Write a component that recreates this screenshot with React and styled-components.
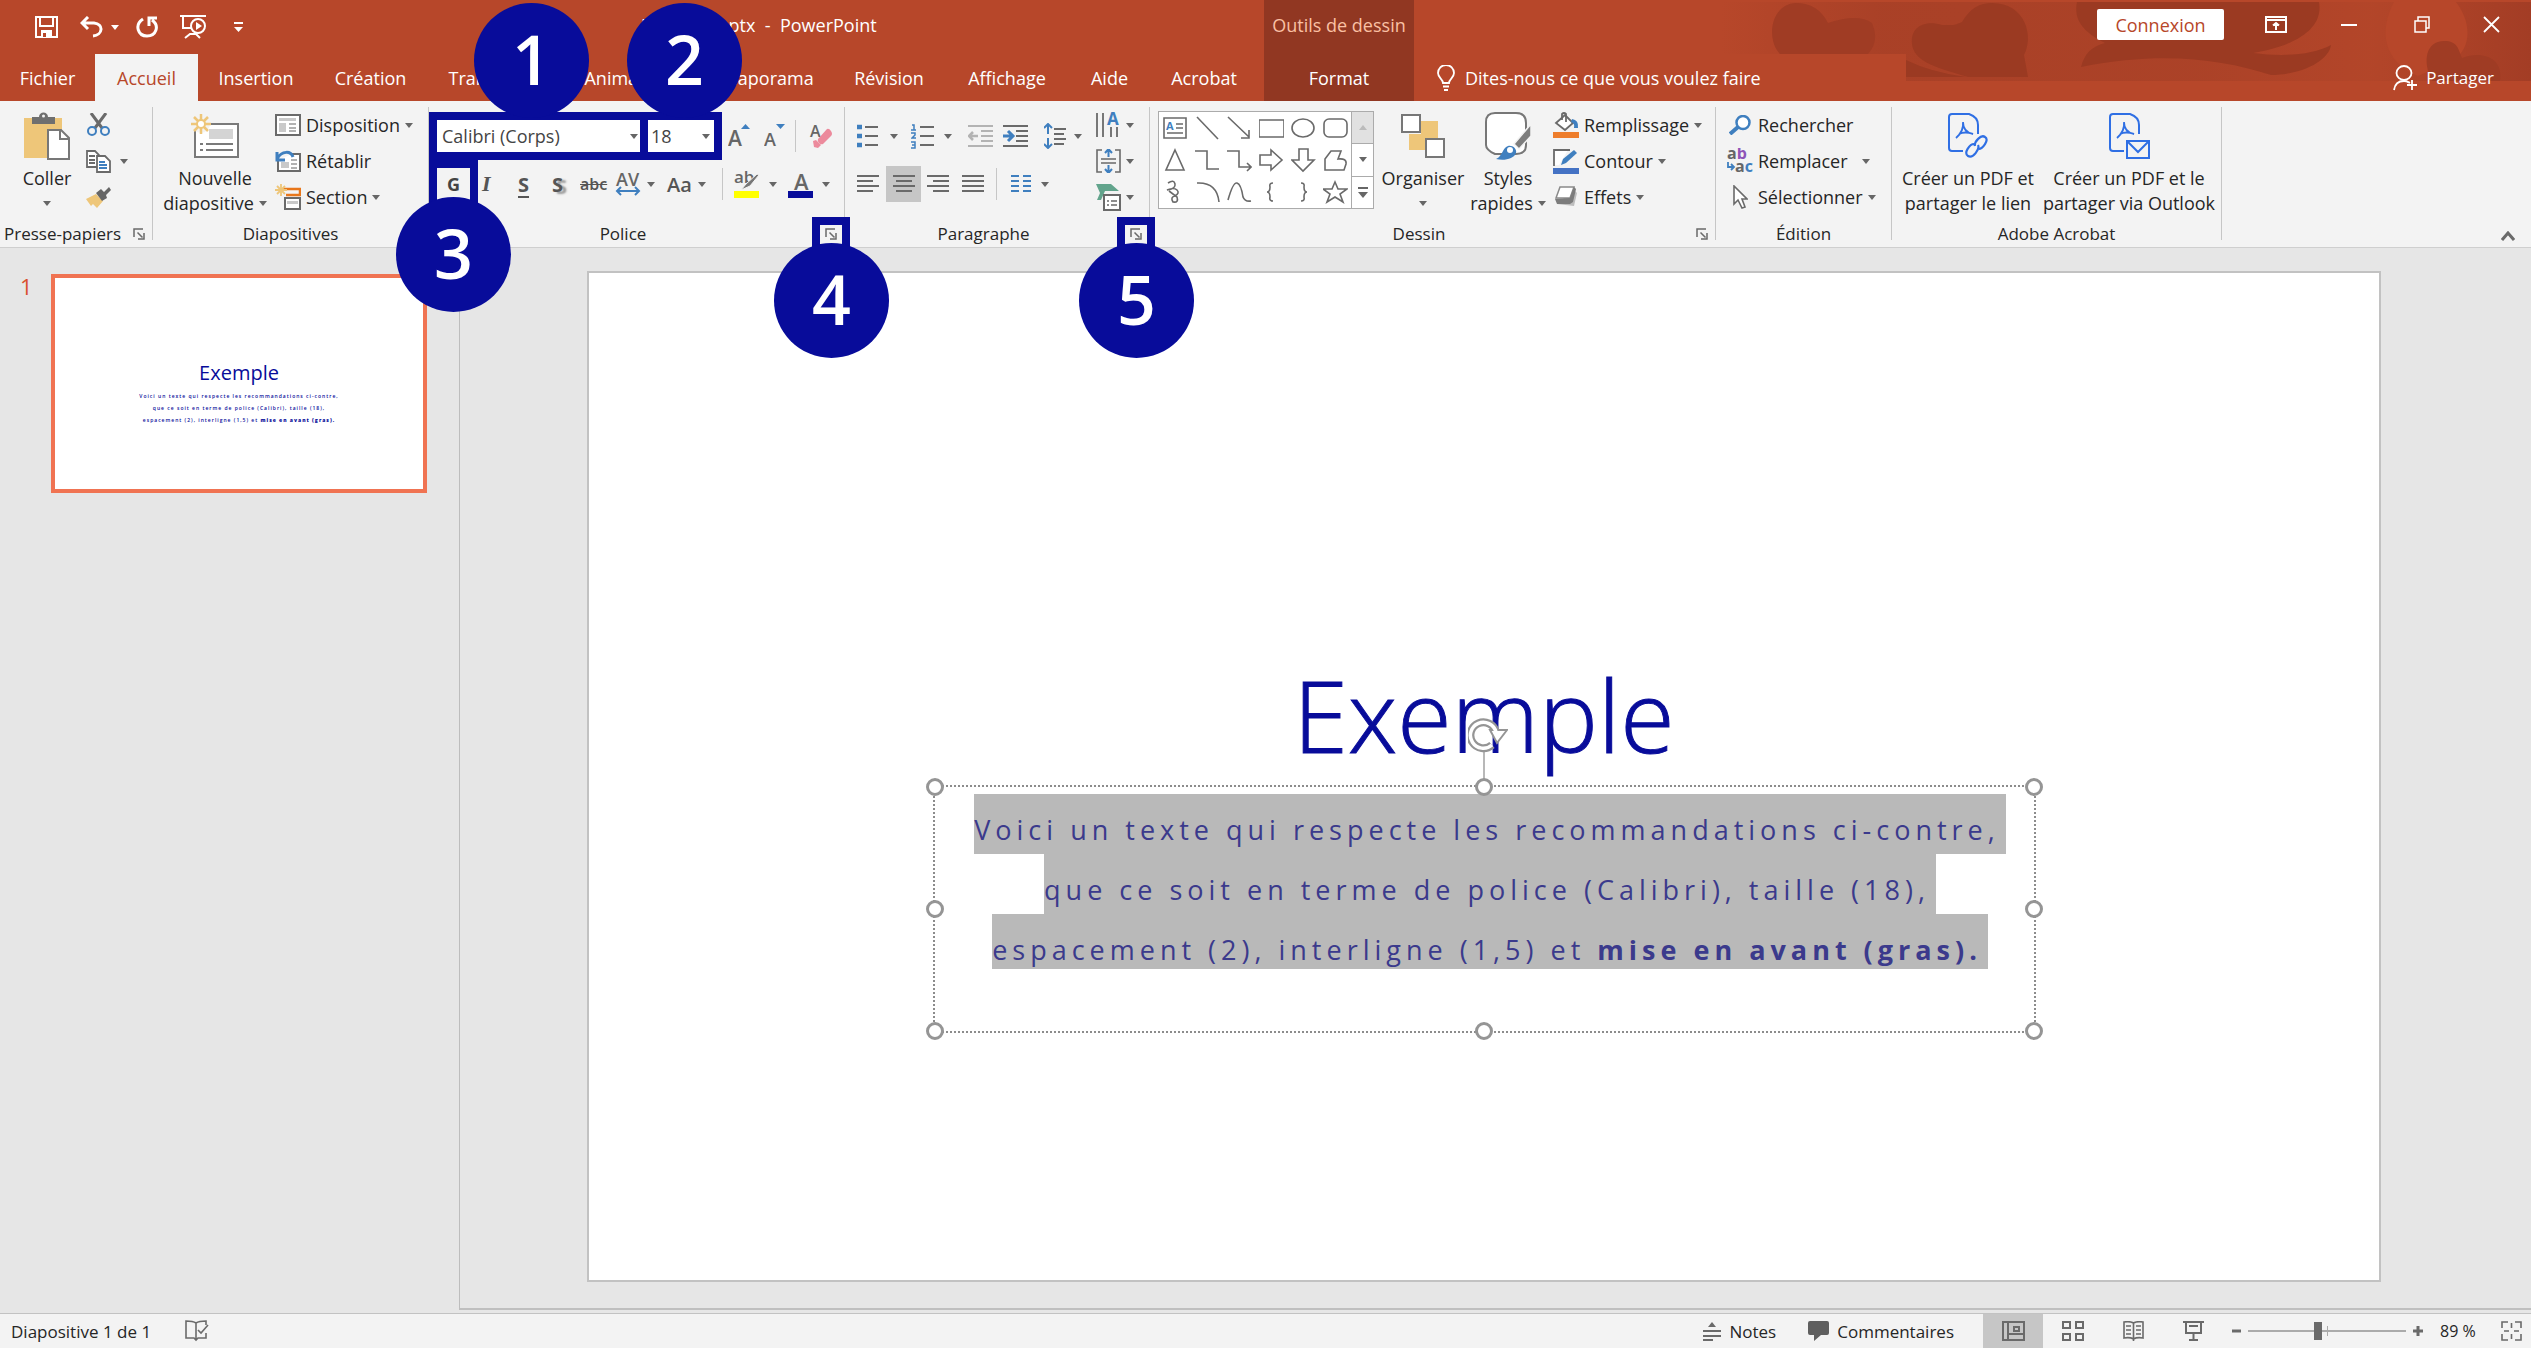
import React from 'react';
import styled, { createGlobalStyle } from 'styled-components';

const C = {
  brand: '#b7472a',
  brandDark: '#913722',
  ribbon: '#f3f3f3',
  work: '#e6e6e6',
  line: '#c6c6c6',
  ink: '#262626',
  icon: '#6a6a6a',
  blue: '#3f7fbf',
  navy: '#080c9a',
  gold: '#eec679',
  acrobat: '#2f6fe4',
};

const Global = createGlobalStyle`
  *, *::before, *::after { box-sizing: border-box; }
  body { margin: 0; background: ${C.work}; }
  body, button, select, input { font-family: "Open Sans", "Noto Sans", sans-serif; }
  button { border: 0; padding: 0; margin: 0; background: none; color: inherit; font-size: inherit; line-height: inherit; cursor: pointer; }
  svg { display: block; flex: none; }
`;

const Shell = styled.div`
  display: flex;
  flex-direction: column;
  min-height: 100vh;
  color: ${C.ink};
  font-size: 17px;
`;

/* ---------- header ---------- */
const Header = styled.header`
  position: relative;
  background: ${C.brand};
  color: #fff;
`;
const Pattern = styled.svg`
  position: absolute;
  top: 0;
  right: 0;
`;
const TitleBar = styled.div`
  position: relative;
  display: grid;
  grid-template-columns: 641px 623px 150px 1fr;
  height: 54px;
`;
const QuickAccess = styled.div`
  display: flex;
  align-items: center;
  padding-left: 35px;
`;
const QuickButton = styled.button`
  display: flex;
  align-items: center;
  gap: 8px;
  width: ${(p) => p.$w}px;
`;
const DocTitle = styled.div`
  padding-top: 12px;
  line-height: 26px;
  font-size: 18px;
  white-space: pre;
`;
const ContextTitle = styled.div`
  background: ${C.brandDark};
  color: #fac0a4;
  padding-top: 12px;
  font-size: 18px;
  line-height: 26px;
  text-align: center;
`;
const WindowControls = styled.div`
  display: flex;
  justify-content: flex-end;
  align-items: flex-start;
  padding-top: 9px;
`;
const SignIn = styled.button`
  width: 127px;
  height: 31px;
  margin-right: 21px;
  background: #fff;
  border-radius: 2px;
  color: ${C.brand};
  font-size: 18px;
`;
const WindowButton = styled.button`
  display: flex;
  justify-content: center;
  align-items: center;
  width: ${(p) => p.$w || 73}px;
  height: 31px;
`;
const TabBar = styled.nav`
  position: relative;
  display: flex;
  height: 47px;
`;
const Tab = styled.button`
  width: ${(p) => p.$w}px;
  height: 47px;
  font-size: 18px;
  line-height: 24px;
  color: ${(p) => (p.$active ? C.brand : '#fff')};
  background: ${(p) => (p.$active ? C.ribbon : p.$context ? C.brandDark : 'transparent')};
  margin-left: ${(p) => (p.$context ? 6 : 0)}px;
`;
const TellMe = styled.button`
  display: flex;
  align-items: center;
  gap: 9px;
  margin-left: 23px;
  font-size: 18px;
`;
const Share = styled.button`
  display: flex;
  align-items: center;
  gap: 8px;
  margin-left: auto;
  padding-right: 37px;
`;

/* ---------- ribbon ---------- */
const Ribbon = styled.section`
  position: relative;
  z-index: 2;
  display: flex;
  height: 147px;
  padding: 6px 0;
  background: ${C.ribbon};
  border-bottom: 1px solid #cfcfcf;
  font-size: 18px;
`;
const Group = styled.div`
  display: flex;
  flex-direction: column;
  width: ${(p) => p.$w}px;
  height: 133px;
  border-right: 1px solid ${C.line};
`;
const GroupBody = styled.div`
  display: flex;
  flex: none;
  height: 115px;
  padding-left: ${(p) => p.$pad || 0}px;
`;
const GroupFooter = styled.div`
  display: flex;
  flex: none;
  align-items: center;
  height: 24px;
  padding-right: ${(p) => (p.$launcher ? 7 : 0)}px;
  font-size: 17px;
  line-height: 24px;
`;
const GroupName = styled.span`
  flex: 1;
  text-align: center;
`;
const LauncherBox = styled.div`
  position: relative;
  padding-left: 8px;
`;
const Big = styled.button`
  display: flex;
  flex-direction: column;
  align-items: center;
  align-self: flex-start;
  width: ${(p) => p.$w}px;
  padding-top: 5px;
  line-height: 25px;
`;
const BigIcon = styled.span`
  display: flex;
  align-items: center;
  justify-content: center;
  height: 48px;
  margin-bottom: 6px;
`;
const BigLine = styled.span`
  display: flex;
  align-items: center;
  gap: 5px;
  height: 25px;
  white-space: nowrap;
`;
const Stack = styled.div`
  display: flex;
  flex-direction: column;
  padding-left: ${(p) => p.$pad || 0}px;
`;
const Small = styled.button`
  display: flex;
  align-items: center;
  gap: ${(p) => p.$gap || 5}px;
  height: 36px;
  white-space: nowrap;
`;
const SmallIcon = styled.span`
  display: flex;
  justify-content: center;
  width: 26px;
`;
const ToolRow = styled.div`
  display: grid;
  grid-template-columns: ${(p) => p.$cols};
  align-items: center;
  height: 48px;
`;
const Rows = styled.div`
  width: ${(p) => p.$w || 416}px;
  padding-top: 5px;
`;
const Tool = styled.button`
  display: flex;
  align-items: center;
  justify-self: start;
  gap: ${(p) => p.$gap || 6}px;
  height: 36px;
  color: #555;
  font-size: ${(p) => p.$size || 18}px;
  font-weight: ${(p) => (p.$bold ? 700 : 600)};
  text-decoration: ${(p) => p.$deco || 'none'};
  text-shadow: ${(p) => (p.$shadow ? '4px 2px 2px #999' : 'none')};
  text-underline-offset: 4px;
`;
const ItalicTool = styled(Tool)`
  font-family: "Liberation Serif", serif;
  font-size: 22px;
  font-style: italic;
`;
const Pressed = styled(Tool)`
  width: 35px;
  justify-content: center;
  background: #c6c6c6;
`;
const Divider = styled.span`
  width: 1px;
  height: 32px;
  background: ${C.line};
`;
const Marked = styled.div`
  position: relative;
  width: ${(p) => p.$w}px;
  height: 48px;
`;
const Combo = styled.select`
  appearance: none;
  width: 100%;
  height: 48px;
  margin: 0;
  padding: 0 ${(p) => (p.$joined ? 3 : 5)}px;
  border: 8px solid ${C.navy};
  border-left-width: ${(p) => (p.$joined ? 0 : 8)}px;
  border-radius: 0;
  background: #fff;
  color: #444;
  font-size: 18px;
`;
const ComboArrow = styled.span`
  position: absolute;
  right: ${(p) => p.$right}px;
  top: 22px;
  pointer-events: none;
`;
const BoldButton = styled.button`
  width: 49px;
  height: 48px;
  border: 8px solid ${C.navy};
  color: #444;
  font-weight: 700;
`;
const Callout = styled.span`
  position: absolute;
  z-index: 3;
  left: ${(p) => p.$left}px;
  top: ${(p) => p.$top}px;
  width: 115px;
  height: 115px;
  border-radius: 50%;
  background: ${C.navy};
  color: #fff;
  font-size: 68px;
  font-weight: 600;
  line-height: 112px;
  text-align: center;
  pointer-events: none;
`;
const Frame = styled.span`
  position: absolute;
  left: -5px;
  top: -5px;
  width: 38px;
  height: 38px;
  border: 8px solid ${C.navy};
  pointer-events: none;
`;
const Launcher = styled.button`
  display: block;
  padding: 6px 0;
`;
const Gallery = styled.div`
  display: grid;
  grid-template-columns: repeat(6, 32px) 1fr;
  width: 216px;
  height: 98px;
  margin-top: 4px;
  border: 1px solid #ababab;
  background: #fff;
`;
const ShapeButton = styled.button`
  display: flex;
  align-items: center;
  justify-content: center;
  height: 32px;
`;
const GalleryScroll = styled.div`
  grid-column: 7;
  grid-row: 1 / span 3;
  display: flex;
  flex-direction: column;
  border-left: 1px solid #ababab;
`;
const ScrollButton = styled.button`
  display: flex;
  align-items: center;
  justify-content: center;
  flex: 1;
  background: ${(p) => (p.$off ? '#e1e1e1' : '#fff')};
  & + & { border-top: 1px solid #ababab; }
`;
const Collapse = styled.button`
  align-self: flex-end;
  margin-left: auto;
  padding-right: 16px;
`;

/* ---------- workspace ---------- */
const Workspace = styled.main`
  display: grid;
  grid-template-columns: 460px 1fr;
  flex: 1;
  background: ${C.work};
  padding-bottom: 3px;
`;
const Thumbs = styled.aside`
  display: flex;
  align-items: flex-start;
  border-right: 1px solid #bdbdbd;
  padding: 26px 32px 0 20px;
`;
const ThumbNumber = styled.span`
  width: 31px;
  color: #d9502f;
  font-size: 22px;
  line-height: 24px;
`;
const Thumb = styled.button`
  display: flex;
  flex-direction: column;
  align-items: center;
  flex: 1;
  height: 219px;
  border: 4px solid #f07352;
  padding-top: 80px;
  background: #fff;
  color: ${C.navy};
`;
const ThumbTitle = styled.span`
  margin-bottom: 2px;
  font-size: 20px;
  line-height: 30px;
`;
const ThumbLine = styled.span`
  font-size: 5px;
  font-weight: 600;
  line-height: 12px;
  letter-spacing: 1px;
  white-space: nowrap;
`;
const Stage = styled.div`
  display: flex;
  border-bottom: 2px solid #bfbfbf;
  padding: 23px 150px 26px 127px;
`;
const Slide = styled.article`
  display: flex;
  flex-direction: column;
  align-items: center;
  flex: 1;
  padding-top: 386px;
  border: 2px solid #c2c2c2;
  background: #fff;
  color: ${C.navy};
`;
const SlideTitle = styled.h1`
  margin: 0 0 14px;
  font-size: 99px;
  font-weight: 300;
  line-height: 112px;
  -webkit-text-stroke: 1px ${C.navy};
`;
const TextBox = styled.div`
  position: relative;
  display: flex;
  flex-direction: column;
  align-items: center;
  width: 1103px;
  height: 248px;
  padding: 7px 0 0 12px;
  border: 2px dotted #8c8c8c;
`;
const Line = styled.p`
  margin: 0;
  padding: ${(p) => (p.$last ? '18px 6px 1px 0' : '18px 6px 6px 0')};
  background: #b9b9b9;
  color: #3b3a8c;
  font-size: 27px;
  line-height: 36px;
  letter-spacing: 5px;
  white-space: nowrap;
`;
const Handle = styled.span`
  position: absolute;
  left: ${(p) => p.$x};
  top: ${(p) => p.$y};
  width: 18px;
  height: 18px;
  margin: -9px;
  border: 3px solid #959595;
  border-radius: 50%;
  background: #fff;
`;
const Rotate = styled.svg`
  position: absolute;
  left: 50%;
  top: -70px;
  margin-left: -16px;
`;

/* ---------- status bar ---------- */
const Status = styled.footer`
  display: flex;
  align-items: center;
  height: 35px;
  border-top: 1px solid #c2c2c2;
  background: ${C.ribbon};
  padding: 0 9px 0 11px;
`;
const StatusButton = styled.button`
  display: flex;
  align-items: center;
  gap: 8px;
  margin-right: ${(p) => p.$after || 0}px;
`;
const StatusLeft = styled.div`
  display: flex;
  align-items: center;
  gap: 34px;
  margin-right: auto;
`;
const ViewButton = styled.button`
  display: flex;
  align-items: center;
  justify-content: center;
  width: 60px;
  height: 34px;
  background: ${(p) => (p.$active ? '#c6c6c6' : 'transparent')};
`;
const Zoom = styled.div`
  display: flex;
  align-items: center;
  gap: 7px;
  padding-left: 9px;
`;
const Slider = styled.input`
  appearance: none;
  width: 158px;
  height: 24px;
  margin: 0;
  background:
    linear-gradient(#ababab, #ababab) 79px 50% / 1px 10px no-repeat,
    linear-gradient(#ababab, #ababab) 0 50% / 100% 2px no-repeat;
  &::-webkit-slider-thumb {
    appearance: none;
    width: 8px;
    height: 18px;
    background: #6a6a6a;
  }
`;
const Percent = styled.output`
  width: 38px;
  margin: 0 16px 0 10px;
  font-size: 16px;
  white-space: nowrap;
`;

/* ---------- drawings ---------- */
const Svg = ({ w, h, children, ...rest }) => (
  <svg width={w} height={h} viewBox={`0 0 ${w} ${h}`} fill="none" stroke={C.icon} strokeWidth="2" aria-hidden="true" {...rest}>
    {children}
  </svg>
);
const Caret = ({ color = '#666' }) => (
  <Svg w={8} h={5} stroke="none"><path d="M0 0h8L4 5z" fill={color} /></Svg>
);
const LauncherIcon = () => (
  <Svg w={12} h={12} strokeWidth="1.5"><path d="M1 9V1h9M4.500 4.500l5 5M11 5v6H5" /></Svg>
);

const SaveIcon = () => (
  <Svg w={23} h={22} stroke="#fff"><path d="M1 1h21v20H1z M5 1v9h13V1" /><path d="M6 14h11v7H6z" fill="#fff" stroke="none" /><path d="M8 17h3v4H8z" fill={C.brand} stroke="none" /></Svg>
);
const UndoIcon = () => (
  <Svg w={23} h={22} stroke="#fff" strokeWidth="3"><path d="M8 1L2 7l6 6M2 7h12c10 1 9 12-1 13" /></Svg>
);
const RedoIcon = () => (
  <Svg w={22} h={22} stroke="#fff" strokeWidth="3"><path d="M7 3C-2 9 2 20 11 20s13-10 5-16M13 10V2h8" /></Svg>
);
const PresentIcon = () => (
  <Svg w={27} h={26} stroke="#fff"><path d="M0 2h26M3 2v12h8M5 24l5-4h6l4 4" /><circle cx="18" cy="12" r="7" /><path d="M16 8l6 4-6 4z" fill="#fff" stroke="none" /></Svg>
);
const CustomizeIcon = () => (
  <Svg w={9} h={10} stroke="#fff"><path d="M0 1h9" /><path d="M0 5h9l-4.500 5z" fill="#fff" stroke="none" /></Svg>
);
const BulbIcon = () => (
  <Svg w={19} h={26} stroke="#fff"><path d="M6 18c0-4-5-5-5-10a8 8 0 0 1 16 0c0 5-5 6-5 10zM6 21.500h6M7 25h4" strokeWidth="1.800" /></Svg>
);
const ShareIcon = () => (
  <Svg w={25} h={26} stroke="#fff" strokeWidth="1.800"><ellipse cx="11" cy="8" rx="7.500" ry="7" /><path d="M1 25c1-7 5-9 10-9 3 0 4 1 6 2M14 20h10M19 15v10" /></Svg>
);

const PasteIcon = () => (
  <Svg w={46} h={48}><path d="M0 6h38v40H0z" fill={C.gold} stroke="none" /><path d="M8 12V5h7c0-6 9-6 9 0h7v7z" fill="#6f6f6f" stroke="none" /><circle cx="19.500" cy="4" r="1.500" fill={C.ribbon} stroke="none" /><path d="M24 18h13l8 8v21H24z" fill="#fff" stroke="#777" /><path d="M36 18v9h9" stroke="#777" /></Svg>
);
const CutIcon = () => (
  <Svg w={23} h={24}><path d="M4 0l11 15M19 0L8 15" strokeWidth="3" /><circle cx="5" cy="18" r="4" stroke={C.blue} /><circle cx="18" cy="18" r="4" stroke={C.blue} /></Svg>
);
const CopyIcon = () => (
  <Svg w={25} h={23} strokeWidth="1.800"><path d="M1 1h8l4 4v12H1z M3 6h6M3 10h6M3 13h6" fill="#fff" /><path d="M11 6h8l5 5v11H11z" fill="#fff" /><path d="M13 12h6M13 15h8M13 18h8" stroke={C.blue} /></Svg>
);
const BrushIcon = () => (
  <Svg w={26} h={22} stroke="none"><path d="M1 13l10-5 7 7-6 7-4-4-2 2z" fill={C.gold} /><path d="M11 7l5-4 3 3 5-5 2 3-5 5 1 3-5 3z" fill="#666" /></Svg>
);
const NewSlideIcon = () => (
  <Svg w={48} h={44}><path d="M4 10h43v33H4z" fill="#fff" stroke="#7a7a7a" /><path d="M18 15h24v10H18z" fill="#d4d4d4" stroke="none" /><path d="M15 30h27M15 36h27M9 30h3M9 36h3" stroke="#7a7a7a" /><circle cx="10" cy="10" r="9" fill={C.ribbon} stroke="none" /><path d="M10 0v20M0 10h20M3 3l14 14M17 3L3 17" stroke={C.gold} strokeWidth="2.500" /><circle cx="10" cy="10" r="4" fill="#fff" stroke={C.gold} /></Svg>
);
const LayoutIcon = () => (
  <Svg w={26} h={22}><path d="M1 1h24v20H1z" fill="#fff" /><path d="M4 4h17v3H4zM4 9h7v9H4z" fill="#c9c9c9" stroke="none" /><path d="M14 10h7M14 14h7M14 17h7" stroke="#999" strokeWidth="1.500" /></Svg>
);
const ResetIcon = () => (
  <Svg w={26} h={22}><path d="M3 10v11h22V4h-8" fill="#fff" /><path d="M6 12h8v6H6z" fill="#c9c9c9" stroke="none" /><path d="M16 10h6M16 14h6M16 18h6" stroke="#999" strokeWidth="1.500" /><path d="M2 2v8h8M2 9c5-9 14-8 16-2" stroke={C.blue} strokeWidth="3" /></Svg>
);
const SectionIcon = () => (
  <Svg w={26} h={26}><path d="M10 14h15v11H10z" fill="#fff" /><path d="M12 17h11v3H12z" fill="#c9c9c9" stroke="none" /><path d="M8 5h17v6H11" stroke="#e8761a" strokeWidth="2.500" /><path d="M6 0v12M0 6h12M2 2l8 8M10 2l-8 8" stroke={C.gold} strokeWidth="1.800" /></Svg>
);
const GrowIcon = ({ small }) => (
  <Svg w={22} h={26} stroke="none"><text x="0" y="23" fontSize={small ? 18 : 21} fontWeight="600" fill="#666">A</text>{small ? <path d="M12 1h9l-4.500 5z" fill={C.blue} /> : <path d="M13 6h9l-4.500-5z" fill={C.blue} />}</Svg>
);
const EraserIcon = () => (
  <Svg w={24} h={25} stroke="none"><text x="1" y="13" fontSize="16" fontWeight="600" fill="#666">A</text><path d="M9 15l9-10q2-1 4 2t0 5l-8 8q-2 1-4-1t-1-4z" fill="#ec8a9c" /><path d="M4 17l3-1 5 5-3 3-4-1z" fill="#ec8a9c" /></Svg>
);
const SpacingIcon = () => (
  <Svg w={26} h={26} stroke="none"><text x="1" y="15" fontSize="18" fontWeight="600" fill="#666">AV</text><path d="M2 20h22M6 16l-4 4 4 4M20 16l4 4-4 4" stroke={C.blue} strokeWidth="2" /></Svg>
);
const HighlightIcon = () => (
  <Svg w={26} h={28} stroke="none"><text x="0" y="13" fontSize="17" fontWeight="600" fill="#666">ab</text><path d="M7 20l5-6L23 4l2 1-9 11z" fill="#777" stroke={C.ribbon} strokeWidth="1" /><path d="M0 21h25v7H0z" fill="#ff0" /></Svg>
);
const FontColorIcon = () => (
  <Svg w={26} h={28} stroke="none"><text x="6" y="20" fontSize="22" fontWeight="600" fill="#666">A</text><path d="M0 21h25v7H0z" fill={C.navy} /></Svg>
);
const BulletsIcon = () => (
  <Svg w={22} h={26}><path d="M8 4h13M8 13h13M8 22h13" /><path d="M0 4h5M0 13h5M0 22h5" stroke={C.blue} strokeWidth="4.500" /></Svg>
);
const NumbersIcon = () => (
  <Svg w={23} h={26}><path d="M9 4h14M9 13h14M9 22h14" /><path d="M1 2h2v5M0 7h5M0 10h4v2l-3 3h4M0 19h4v6H0M1 22h3" stroke={C.blue} strokeWidth="1.500" /></Svg>
);
const IndentIcon = ({ out }) => (
  <Svg w={25} h={24} stroke={out ? '#b3b3b3' : C.icon}><path d="M0 2h25M13 7h12M13 12h12M13 17h12M0 22h25" />{out ? <path d="M10 12H1M5 8l-4 4 4 4" strokeWidth="2.500" /> : <path d="M0 12h9M5 7l5 5-5 5" stroke={C.blue} strokeWidth="3" />}</Svg>
);
const LineSpacingIcon = () => (
  <Svg w={22} h={26}><path d="M10 6h12M10 11h10M10 16h12M10 21h10" /><path d="M4 1v10M0 5l4-4 4 4M4 15v10M0 21l4 4 4-4" stroke={C.blue} /></Svg>
);
const AlignIcon = ({ d }) => <Svg w={22} h={18} strokeWidth="1.800"><path d={d} /></Svg>;
const ColumnsIcon = () => (
  <Svg w={20} h={18} stroke={C.blue}><path d="M0 1h8M0 6h8M0 11h8M0 16h8M12 1h8M12 6h8M12 11h8M12 16h8" strokeWidth="1.800" /></Svg>
);
const TextDirIcon = () => (
  <Svg w={25} h={26}><path d="M1 1v24M7 1v24M15 15v10M21 15v10" strokeWidth="1.800" /><text x="11" y="13" fontSize="17" fontWeight="700" fill={C.blue} stroke="none">A</text></Svg>
);
const AlignTextIcon = () => (
  <Svg w={25} h={24}><path d="M6 1H1v22h5M19 1h5v22h-5M5 10h15M5 14h15" strokeWidth="1.600" /><path d="M12.500 0v8M9 4l3.500-4L16 4M12.500 24v-8M9 20l3.500 4 3.500-4" stroke={C.blue} /></Svg>
);
const SmartArtIcon = () => (
  <Svg w={25} h={27}><path d="M0 0h15l8 7H9l-4 9H1l3-7z" fill="#62a48c" stroke="none" /><path d="M8 11h16v15H8z" fill="#fff" /><path d="M11 17h2M11 21h2M15 17h6M15 21h6" strokeWidth="1.600" /></Svg>
);
const ArrangeIcon = () => (
  <Svg w={44} h={44}><path d="M20 7h17v17H20zM8 20h16v16H8z" fill={C.gold} stroke="none" /><path d="M1 1h18v17H1zM25 25h18v18H25z" fill="#fff" stroke="#777" /></Svg>
);
const StylesIcon = () => (
  <Svg w={47} h={48}><path d="M10 1h21q10 0 10 10v22q0 9-10 9H10q-9-4-9-9V10Q1 1 10 1z" fill="#fff" stroke="#777" /><path d="M46 12v12L34 37l-5-5z" fill="#7d7d7d" stroke={C.ribbon} strokeWidth="1.500" /><path d="M11 47c7-3 6-11 12-13 5-1 9 3 8 7-2 6-12 8-20 6z" fill={C.blue} stroke="none" /><circle cx="25" cy="38" r="3" fill="#fff" stroke="none" /></Svg>
);
const FillIcon = () => (
  <Svg w={26} h={26} strokeWidth="1.800"><path d="M3 11l9-8 8 8-8 7z" fill="#fff" /><path d="M9 8V2q2-2 4 0v8" /><path d="M19 7q7 1 6 9h-4q1-5-3-6z" fill={C.blue} stroke="none" /><path d="M0 20h26v6H0z" fill="#ee7d2b" stroke="none" /></Svg>
);
const OutlineIcon = () => (
  <Svg w={26} h={26} strokeWidth="1.800"><path d="M1 2h14L6 17H1z" fill="#fff" stroke="none" /><path d="M1 18V2h16" /><path d="M8 17l2-6L21 2l3 3-11 10z" fill={C.blue} stroke="none" /><path d="M0 20h26v6H0z" fill="#4472c4" stroke="none" /></Svg>
);
const EffectsIcon = () => (
  <Svg w={24} h={22}><path d="M3 18l17 2 3-13-3-3z" fill="#bdbdbd" stroke="none" /><path d="M6 1h14l-4 11H2z" fill="#fff" stroke="#8a8a8a" strokeWidth="1.500" /><path d="M20 1l2 2-3 13-3 2H3l-2-5 15-1z" fill="#7c7c7c" stroke="none" /></Svg>
);
const SearchIcon = () => (
  <Svg w={22} h={20} stroke={C.blue}><circle cx="14" cy="7.500" r="6.500" fill="#fff" strokeWidth="2.500" /><path d="M9 12l-8 7" strokeWidth="4" /></Svg>
);
const ReplaceIcon = () => (
  <Svg w={27} h={26} stroke="none"><text x="0" y="11" fontSize="16" fontWeight="700" fill="#666">a<tspan fill="#8e55b8">b</tspan></text><text x="8" y="24" fontSize="16" fontWeight="700" fill="#666">a<tspan fill={C.blue}>c</tspan></text><path d="M1 14v5h5M4 16l3 3-3 3" stroke={C.blue} strokeWidth="1.800" /></Svg>
);
const SelectIcon = () => (
  <Svg w={15} h={25} strokeWidth="1.600"><path d="M1 1v18l4-4 4 8 3-1-3-8h5z" fill="#fff" /></Svg>
);
const PdfIcon = ({ mail }) => (
  <Svg w={41} h={46} stroke={C.acrobat}><path d="M15 38H4q-3 0-3-3V4q0-3 3-3h17q9 3 9 11v9" /><path d="M15 9q1 9-7 16M15 9q0 10 10 12-8-3-14 0" strokeWidth="1.800" />{mail ? <path d="M18 28h22v17H18zM18 28l11 11 11-11" fill={C.ribbon} /> : <path d="M27 33c-1-4 6-12 10-9 5 3-3 12-6 12M30 32c2 4-5 14-10 11-5-3 2-12 6-12" strokeWidth="2.200" />}</Svg>
);

const shapes = [
  ['Zone de texte', <g key="s"><path d="M1 3h22v20H1z" /><text x="3" y="15" fontSize="11" fontWeight="700" fill={C.blue} stroke="none">A</text><path d="M13 9h7M13 13h7M4 18h16" /></g>],
  ['Ligne', <path key="s" d="M2 2l21 22" />],
  ['Flèche', <path key="s" d="M1 2l21 20M22 15v8h-8" />],
  ['Rectangle', <path key="s" d="M0 5h25v17H0z" />],
  ['Ellipse', <ellipse key="s" cx="12" cy="13" rx="11" ry="9" />],
  ['Rectangle arrondi', <rect key="s" x="1" y="4" width="23" height="18" rx="5" />],
  ['Triangle', <path key="s" d="M12 3l9 20H3z" />],
  ['Connecteur coudé', <path key="s" d="M0 4h12v18h12" />],
  ['Connecteur fléché', <path key="s" d="M0 4h12v16h12M20 16l4 4-4 4" />],
  ['Flèche droite', <path key="s" d="M1 8h11V3l11 10-11 10v-5H1z" />],
  ['Flèche bas', <path key="s" d="M8 2h9v11h6L12 24 1 13h7z" />],
  ['Forme libre', <path key="s" d="M2 12l6-8h10l-3 8q9-1 8 5l-2 6H2z" />],
  ['Dessin', <path key="s" d="M5 4q6-4 7 1t-8 6q7-3 10 0t-2 6M12 17q-5 1-2 6 6 1 4-5l-8-6" />],
  ['Arc', <path key="s" d="M2 4q20-1 22 19" />],
  ['Courbe', <path key="s" d="M1 21Q6 3 10 4t6 14q2 5 8 4" />],
  ['Accolade gauche', <path key="s" d="M14 4q-4 0-3 4 0 5-3 5 3 0 3 5-1 4 3 4" />],
  ['Accolade droite', <path key="s" d="M10 4q4 0 3 4 0 5 3 5-3 0-3 5 1 4-3 4" />],
  ['Étoile', <path key="s" d="M12 3l3 7h9l-7 5 3 8-8-5-8 5 3-8-7-5h9z" />],
];

const tabs = [
  ['Fichier', 95], ['Accueil', 103], ['Insertion', 116], ['Création', 113], ['Transitions', 136],
  ['Animations', 138], ['Diaporama', 132], ['Révision', 112], ['Affichage', 124], ['Aide', 81], ['Acrobat', 108],
];

const body = [
  'Voici un texte qui respecte les recommandations ci-contre,',
  'que ce soit en terme de police (Calibri), taille (18),',
];
const LastLine = () => (
  <>espacement (2), interligne (1,5) et <b>mise en avant (gras).</b></>
);

function RibbonGroup({ name, w, pad, launcher, mark, children }) {
  return (
    <Group $w={w}>
      <GroupBody $pad={pad}>{children}</GroupBody>
      <GroupFooter $launcher={launcher}>
        <GroupName>{name}</GroupName>
        {launcher && (
          <LauncherBox>
            <Launcher aria-label={`Options ${name}`}><LauncherIcon /></Launcher>
            {mark && <Frame />}
            {mark && <Callout $left={-43} $top={21}>{mark}</Callout>}
          </LauncherBox>
        )}
      </GroupFooter>
    </Group>
  );
}

const SmallCommand = ({ icon, label, caret }) => (
  <Small>
    <SmallIcon>{icon}</SmallIcon>
    {label}
    {caret && <Caret />}
  </Small>
);
const BigCommand = ({ w, icon, lines, caret }) => (
  <Big $w={w}>
    <BigIcon>{icon}</BigIcon>
    {lines.map((l, i) => (
      <BigLine key={i}>{l}{caret && i === lines.length - 1 && <Caret />}</BigLine>
    ))}
  </Big>
);

function HeaderPattern() {
  return (
    <Pattern width="811" height="82" viewBox="0 0 811 82" aria-hidden="true">
      <defs>
        <linearGradient id="haze" x1="0" x2="1" y1="0" y2="0">
          <stop offset="0" stopColor="#a63f26" stopOpacity="0" />
          <stop offset="0.2" stopColor="#a63f26" stopOpacity="0.8" />
          <stop offset="0.6" stopColor="#a94127" stopOpacity="0.8" />
          <stop offset="0.8" stopColor="#b24529" stopOpacity="0.8" />
          <stop offset="1" stopColor="#a33d25" />
        </linearGradient>
        <clipPath id="band"><path d="M0 2h811v79H186V54H0z" /></clipPath>
      </defs>
      <g clipPath="url(#band)">
        <path d="M0 2h811v79H0z" fill="url(#haze)" />
        <path d="M60 54C46 40 50 4 76 3q22 0 32 20q30-10 44 0q8 18-4 31z" fill="#a03c24" />
        <g fill="#9b3a22">
          <path d="M192 44C190 26 206 20 222 25 236 25 232 26 242 22 250 8 260 3 272 3c34 0 42 34 32 52l4 22h-60C210 66 194 60 192 44z" />
          <path d="M186 60q24 12 60 17h-60z" />
          <path d="M357 2h242c4 22-14 42-66 51 30 4 60 2 78-8-2 16-30 30-60 30-50-16-110-24-190-8 4-14 10-20 24-24-20-10-32-22-28-41z" />
        </g>
        <path d="M674 2h62c18 24 14 50-6 60l-32 14c-34-14-40-44-24-74z" fill="#b7472a" />
        <path d="M712 81c-10-20-6-40 12-40 14 0 14 8 18 17 20-8 42 0 38 23z" fill="#9f3c24" />
      </g>
    </Pattern>
  );
}

export default function App() {
  return (
    <Shell>
      <Global />
      <Header>
        <HeaderPattern />
        <TitleBar>
          <QuickAccess>
            <QuickButton $w={45} aria-label="Enregistrer"><SaveIcon /></QuickButton>
            <QuickButton $w={56} aria-label="Annuler"><UndoIcon /><Caret color="#fff" /></QuickButton>
            <QuickButton $w={44} aria-label="Rétablir"><RedoIcon /></QuickButton>
            <QuickButton $w={54} aria-label="Diaporama"><PresentIcon /></QuickButton>
            <QuickButton $w={9} aria-label="Personnaliser"><CustomizeIcon /></QuickButton>
          </QuickAccess>
          <DocTitle>{'Exemple.pptx  -  PowerPoint'}</DocTitle>
          <ContextTitle>Outils de dessin</ContextTitle>
          <WindowControls>
            <SignIn>Connexion</SignIn>
            <WindowButton $w={61} aria-label="Options du ruban">
              <Svg w={22} h={17} stroke="#fff"><path d="M1 1h20v15H1zM1 4h20M11 14V7M8 9.500L11 7l3 2.500" /></Svg>
            </WindowButton>
            <WindowButton $w={86} aria-label="Réduire">
              <Svg w={16} h={2} stroke="#fff"><path d="M0 1h16" /></Svg>
            </WindowButton>
            <WindowButton $w={59} aria-label="Restaurer">
              <Svg w={16} h={17} stroke="#fff" strokeWidth="1.500"><path d="M1 5h11v11H1zM4 5V1h11v11h-3" /></Svg>
            </WindowButton>
            <WindowButton $w={80} aria-label="Fermer">
              <Svg w={17} h={17} stroke="#fff" strokeWidth="1.800"><path d="M1 1l15 15M16 1L1 16" /></Svg>
            </WindowButton>
          </WindowControls>
        </TitleBar>
        <TabBar>
          {tabs.map(([label, w]) => (
            <Tab key={label} $w={w} $active={label === 'Accueil'}>{label}</Tab>
          ))}
          <Tab $w={150} $context>Format</Tab>
          <TellMe><BulbIcon />Dites-nous ce que vous voulez faire</TellMe>
          <Share><ShareIcon />Partager</Share>
        </TabBar>
      </Header>

      <Ribbon>
        <RibbonGroup name="Presse-papiers" w={153} pad={9} launcher>
          <BigCommand w={76} icon={<PasteIcon />} lines={['Coller', '']} caret />
          <Stack>
            <Small aria-label="Couper"><SmallIcon><CutIcon /></SmallIcon></Small>
            <Small $gap={9} aria-label="Copier"><SmallIcon><CopyIcon /></SmallIcon><Caret /></Small>
            <Small aria-label="Reproduire la mise en forme"><SmallIcon><BrushIcon /></SmallIcon></Small>
          </Stack>
        </RibbonGroup>

        <RibbonGroup name="Diapositives" w={276} pad={2}>
          <BigCommand w={120} icon={<NewSlideIcon />} lines={['Nouvelle', 'diapositive']} caret />
          <Stack>
            <SmallCommand icon={<LayoutIcon />} label="Disposition" caret />
            <SmallCommand icon={<ResetIcon />} label="Rétablir" />
            <SmallCommand icon={<SectionIcon />} label="Section" caret />
          </Stack>
        </RibbonGroup>

        <RibbonGroup name="Police" w={416} launcher mark="4">
          <Rows>
            <ToolRow $cols="219px 80px 36px 31px 14px auto">
              <Marked $w={219}>
                <Combo aria-label="Police" defaultValue="Calibri (Corps)"><option>Calibri (Corps)</option></Combo>
                <ComboArrow $right={10}><Caret /></ComboArrow>
                <Callout $left={45} $top={-109}>1</Callout>
              </Marked>
              <Marked $w={74}>
                <Combo $joined aria-label="Taille de police" defaultValue="18"><option>18</option></Combo>
                <ComboArrow $right={12}><Caret /></ComboArrow>
                <Callout $left={-21} $top={-109}>2</Callout>
              </Marked>
              <Tool aria-label="Augmenter la taille"><GrowIcon /></Tool>
              <Tool aria-label="Réduire la taille"><GrowIcon small /></Tool>
              <Divider />
              <Tool aria-label="Effacer la mise en forme"><EraserIcon /></Tool>
            </ToolRow>
            <ToolRow $cols="53px 36px 34px 28px 35px 52px 55px 12px 54px auto">
              <Marked $w={49}>
                <BoldButton aria-label="Gras">G</BoldButton>
                <Callout $left={-33} $top={37}>3</Callout>
              </Marked>
              <ItalicTool>I</ItalicTool>
              <Tool $bold $size={20} $deco="underline">S</Tool>
              <Tool $bold $size={20} $shadow>S</Tool>
              <Tool $size={16} $deco="line-through">abc</Tool>
              <Tool aria-label="Espacement des caractères"><SpacingIcon /><Caret /></Tool>
              <Tool $size={20}>Aa<Caret /></Tool>
              <Divider />
              <Tool $gap={9} aria-label="Surlignage"><HighlightIcon /><Caret /></Tool>
              <Tool $gap={8} aria-label="Couleur de police"><FontColorIcon /><Caret /></Tool>
            </ToolRow>
          </Rows>
        </RibbonGroup>

        <RibbonGroup name="Paragraphe" w={305} pad={12} launcher mark="5">
          <Rows $w={238}>
            <ToolRow $cols="54px 57px 35px 41px auto">
              <Tool $gap={11} aria-label="Puces"><BulletsIcon /><Caret /></Tool>
              <Tool $gap={10} aria-label="Numérotation"><NumbersIcon /><Caret /></Tool>
              <Tool aria-label="Réduire le retrait"><IndentIcon out /></Tool>
              <Tool aria-label="Augmenter le retrait"><IndentIcon /></Tool>
              <Tool $gap={8} aria-label="Interligne"><LineSpacingIcon /><Caret /></Tool>
            </ToolRow>
            <ToolRow $cols="29px 41px 35px 34px 15px auto">
              <Tool aria-label="Aligner à gauche"><AlignIcon d="M0 1h22M0 6h16M0 11h22M0 16h16" /></Tool>
              <Pressed aria-label="Centrer"><AlignIcon d="M0 1h22M3 6h16M0 11h22M3 16h16" /></Pressed>
              <Tool aria-label="Aligner à droite"><AlignIcon d="M0 1h22M6 6h16M0 11h22M6 16h16" /></Tool>
              <Tool aria-label="Justifier"><AlignIcon d="M0 1h22M0 6h22M0 11h22M0 16h22" /></Tool>
              <Divider />
              <Tool $gap={10} aria-label="Colonnes"><ColumnsIcon /><Caret /></Tool>
            </ToolRow>
          </Rows>
          <Stack>
            <Small aria-label="Orientation du texte"><SmallIcon><TextDirIcon /></SmallIcon><Caret /></Small>
            <Small aria-label="Aligner le texte"><SmallIcon><AlignTextIcon /></SmallIcon><Caret /></Small>
            <Small aria-label="SmartArt"><SmallIcon><SmartArtIcon /></SmallIcon><Caret /></Small>
          </Stack>
        </RibbonGroup>

        <RibbonGroup name="Dessin" w={566} pad={8} launcher>
          <Gallery>
            {shapes.map(([label, art]) => (
              <ShapeButton key={label} aria-label={label}><Svg w={25} h={26} strokeWidth="1.600">{art}</Svg></ShapeButton>
            ))}
            <GalleryScroll>
              <ScrollButton $off aria-label="Haut"><Svg w={8} h={5} stroke="none"><path d="M0 5h8L4 0z" fill="#bbb" /></Svg></ScrollButton>
              <ScrollButton aria-label="Bas"><Caret /></ScrollButton>
              <ScrollButton aria-label="Autres"><Svg w={10} h={11} stroke="#666"><path d="M0 1h10" /><path d="M0 5h10l-5 6z" fill="#666" stroke="none" /></Svg></ScrollButton>
            </GalleryScroll>
          </Gallery>
          <Stack $pad={4}><BigCommand w={90} icon={<ArrangeIcon />} lines={['Organiser', '']} caret /></Stack>
          <BigCommand w={80} icon={<StylesIcon />} lines={['Styles', 'rapides']} caret />
          <Stack $pad={5}>
            <SmallCommand icon={<FillIcon />} label="Remplissage" caret />
            <SmallCommand icon={<OutlineIcon />} label="Contour" caret />
            <SmallCommand icon={<EffectsIcon />} label="Effets" caret />
          </Stack>
        </RibbonGroup>

        <RibbonGroup name="Édition" w={176} pad={11}>
          <Stack>
            <SmallCommand icon={<SearchIcon />} label="Rechercher" />
            <SmallCommand icon={<ReplaceIcon />} label={'Remplacer\u00a0\u00a0'} caret />
            <SmallCommand icon={<SelectIcon />} label="Sélectionner" caret />
          </Stack>
        </RibbonGroup>

        <RibbonGroup name="Adobe Acrobat" w={330} pad={2}>
          <BigCommand w={148} icon={<PdfIcon />} lines={['Créer un PDF et', 'partager le lien']} />
          <BigCommand w={174} icon={<PdfIcon mail />} lines={['Créer un PDF et le', 'partager via Outlook']} />
        </RibbonGroup>

        <Collapse aria-label="Réduire le ruban">
          <Svg w={14} h={10} strokeWidth="3"><path d="M1 9l6-7 6 7" /></Svg>
        </Collapse>
      </Ribbon>

      <Workspace>
        <Thumbs>
          <ThumbNumber>1</ThumbNumber>
          <Thumb aria-label="Diapositive 1">
            <ThumbTitle>Exemple</ThumbTitle>
            {body.map((l) => <ThumbLine key={l}>{l}</ThumbLine>)}
            <ThumbLine><LastLine /></ThumbLine>
          </Thumb>
        </Thumbs>
        <Stage>
          <Slide>
            <SlideTitle>Exemple</SlideTitle>
            <TextBox>
              <Rotate width="40" height="70" viewBox="0 0 40 70" fill="none" aria-hidden="true">
                <path d="M16 32v30" stroke="#a0a0a0" strokeWidth="1.500" />
                <path d="M24 28A13 13 0 1 1 28 15" stroke="#959595" strokeWidth="8" />
                <path d="M22 13h17L29 26z" fill="#fff" stroke="#959595" strokeWidth="2" />
                <path d="M24 28A13 13 0 1 1 28 15" stroke="#fff" strokeWidth="3.500" />
              </Rotate>
              {body.map((l) => <Line key={l}>{l}</Line>)}
              <Line $last><LastLine /></Line>
              {['0%', '50%', '100%'].flatMap((y) =>
                ['0%', '50%', '100%']
                  .filter((x) => !(x === '50%' && y === '50%'))
                  .map((x) => <Handle key={x + y} $x={x} $y={y} />))}
            </TextBox>
          </Slide>
        </Stage>
      </Workspace>

      <Status>
        <StatusLeft>
          <span>Diapositive 1 de 1</span>
          <button aria-label="Vérification orthographique">
            <Svg w={24} h={22} strokeWidth="1.600"><path d="M11 3v18M11 3Q8 1 1 1v17h8l2 2 2-2h8v-5M11 3q3-2 10-2v4M13 10l3 3 7-8" /></Svg>
          </button>
        </StatusLeft>
        <StatusButton $after={32}>
          <Svg w={18} h={20}><path d="M0 10h18M0 15h18M0 19h10" /><path d="M5 6h8L9 1z" fill={C.icon} stroke="none" /></Svg>
          Notes
        </StatusButton>
        <StatusButton $after={29}>
          <Svg w={21} h={20} stroke="none"><path d="M2 0h17q2 0 2 2v10q0 2-2 2h-6l-7 6v-6H2q-2 0-2-2V2q0-2 2-2z" fill="#5f5f5f" /></Svg>
          Commentaires
        </StatusButton>
        <ViewButton $active aria-label="Normal"><Svg w={23} h={20}><path d="M1 1h21v18H1zM6 1v18M6 13h16M12 6h5v4h-5z" /></Svg></ViewButton>
        <ViewButton aria-label="Trieuse"><Svg w={22} h={20}><path d="M1 1h7v6H1zM14 1h7v6h-7zM1 13h7v6H1zM14 13h7v6h-7z" /></Svg></ViewButton>
        <ViewButton aria-label="Lecture"><Svg w={21} h={20} strokeWidth="1.600"><path d="M10.500 2v18M10.500 2Q7 0 1 1v16q6-1 9.500 1 3.500-2 9.500-1V1q-6-1-9.500 1M3 5h5M3 9h5M3 13h5M13 5h5M13 9h5M13 13h5" /></Svg></ViewButton>
        <ViewButton aria-label="Diaporama"><Svg w={21} h={20}><path d="M0 1h21M3 1v11h15V1M10.500 12v7M6 19h9M6 5h9" /></Svg></ViewButton>
        <Zoom>
          <button aria-label="Zoom arrière"><Svg w={9} h={10} strokeWidth="3"><path d="M0 5h9" /></Svg></button>
          <Slider type="range" aria-label="Zoom" min="0" max="100" defaultValue="44" />
          <button aria-label="Zoom avant"><Svg w={10} h={10} strokeWidth="3"><path d="M0 5h10M5 0v10" /></Svg></button>
          <Percent>89 %</Percent>
          <button aria-label="Ajuster à la fenêtre"><Svg w={21} h={20} strokeWidth="1.600"><path d="M7 1H1v6M14 1h6v6M7 19H1v-6M14 19h6v-6M10.500 2v5M10.500 13v5M3 10h5M13 10h5" /></Svg></button>
        </Zoom>
      </Status>
    </Shell>
  );
}
